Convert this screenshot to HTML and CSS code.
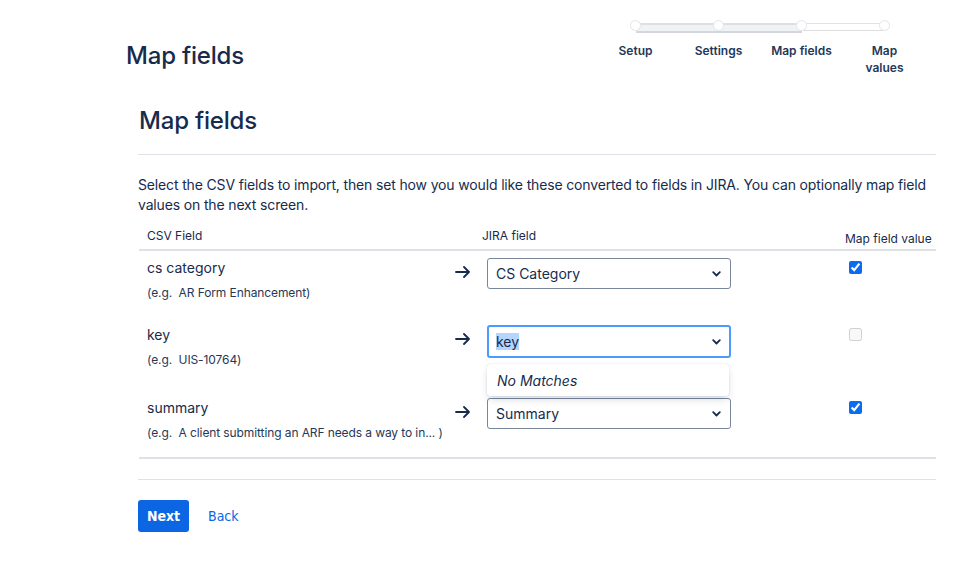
FILE: index.html
```html
<!DOCTYPE html>
<html lang="en">
<head>
<meta charset="utf-8">
<title>Map fields</title>
<link rel="stylesheet" href="styles.css">
</head>
<body>
<div class="page">
  <header class="page-header">
    <h1 class="page-title">Map fields</h1>
    <ol class="tracker">
      <li class="step step--done"><span class="dot"></span><span class="step-label">Setup</span></li>
      <li class="step step--done"><span class="dot"></span><span class="step-label">Settings</span></li>
      <li class="step step--done"><span class="dot"></span><span class="step-label">Map fields</span></li>
      <li class="step"><span class="dot"></span><span class="step-label">Map<br>values</span></li>
    </ol>
  </header>

  <main class="content">
    <h2 class="section-title">Map fields</h2>
    <hr class="rule">
    <p class="intro">Select the CSV fields to import, then set how you would like these converted to fields in JIRA. You can optionally map field values on the next screen.</p>

    <div class="mapping">
      <div class="row row--head">
        <div class="cell cell--csv">CSV Field</div>
        <div class="cell cell--arrow"></div>
        <div class="cell cell--jira">JIRA field</div>
        <div class="cell cell--value">Map field value</div>
      </div>

      <div class="row">
        <div class="cell cell--csv">
          <div class="field-name">cs category</div>
          <div class="field-example">(e.g.&nbsp; AR Form Enhancement)</div>
        </div>
        <div class="cell cell--arrow">
          <svg class="arrow" width="16" height="12" viewBox="0 0 16 12"><path d="M1 6h13M9 1l5 5-5 5" fill="none" stroke="#172B4D" stroke-width="1.8" stroke-linecap="round" stroke-linejoin="round"/></svg>
        </div>
        <div class="cell cell--jira">
          <div class="select">
            <span class="select-text">CS Category</span>
            <svg class="chev" width="9" height="6" viewBox="0 0 9 6"><path d="M1.2 1.2l3.3 3.3 3.3-3.3" fill="none" stroke="#172B4D" stroke-width="1.8" stroke-linecap="round" stroke-linejoin="round"/></svg>
          </div>
        </div>
        <div class="cell cell--value"><input type="checkbox" class="check" checked></div>
      </div>

      <div class="row row--open">
        <div class="cell cell--csv">
          <div class="field-name">key</div>
          <div class="field-example">(e.g.&nbsp; UIS-10764)</div>
        </div>
        <div class="cell cell--arrow">
          <svg class="arrow" width="16" height="12" viewBox="0 0 16 12"><path d="M1 6h13M9 1l5 5-5 5" fill="none" stroke="#172B4D" stroke-width="1.8" stroke-linecap="round" stroke-linejoin="round"/></svg>
        </div>
        <div class="cell cell--jira">
          <div class="combo">
            <div class="select select--focus">
              <span class="select-text"><span class="sel">key</span></span>
              <svg class="chev" width="9" height="6" viewBox="0 0 9 6"><path d="M1.2 1.2l3.3 3.3 3.3-3.3" fill="none" stroke="#172B4D" stroke-width="1.8" stroke-linecap="round" stroke-linejoin="round"/></svg>
            </div>
            <div class="menu"><em>No Matches</em></div>
          </div>
        </div>
        <div class="cell cell--value"><input type="checkbox" class="check" disabled></div>
      </div>

      <div class="row row--last">
        <div class="cell cell--csv">
          <div class="field-name">summary</div>
          <div class="field-example">(e.g.&nbsp; A client submitting an ARF needs a way to in... )</div>
        </div>
        <div class="cell cell--arrow">
          <svg class="arrow" width="16" height="12" viewBox="0 0 16 12"><path d="M1 6h13M9 1l5 5-5 5" fill="none" stroke="#172B4D" stroke-width="1.8" stroke-linecap="round" stroke-linejoin="round"/></svg>
        </div>
        <div class="cell cell--jira">
          <div class="select">
            <span class="select-text">Summary</span>
            <svg class="chev" width="9" height="6" viewBox="0 0 9 6"><path d="M1.2 1.2l3.3 3.3 3.3-3.3" fill="none" stroke="#172B4D" stroke-width="1.8" stroke-linecap="round" stroke-linejoin="round"/></svg>
          </div>
        </div>
        <div class="cell cell--value"><input type="checkbox" class="check" checked></div>
      </div>
    </div>

    <hr class="rule rule--footer">
    <div class="actions">
      <button class="btn-primary" type="button">Next</button>
      <a class="btn-link" href="#">Back</a>
    </div>
  </main>
</div>
</body>
</html>
```

FILE: styles.css
```css
* { box-sizing: border-box; }

html, body {
  margin: 0;
  padding: 0;
  background: #ffffff;
}

body {
  font-family: Inter, "Noto Sans", "Liberation Sans", sans-serif;
  color: #172B4D;
  font-size: 14px;
}

.page {
  width: 971px;
}

/* Header */
.page-header {
  display: flex;
  align-items: flex-start;
  padding-left: 126px;
  height: 76px;
}

.page-title {
  margin: 41px 0 0 0;
  font-size: 24px;
  line-height: 30px;
  font-weight: 500;
  letter-spacing: -0.2px;
  flex: 0 0 auto;
}

.tracker {
  list-style: none;
  margin: 0 0 0 auto;
  padding: 20px 0 0 0;
  display: flex;
  width: 377px;
}

.step {
  position: relative;
  width: 83px;
  display: flex;
  flex-direction: column;
  align-items: center;
}

.step + .step::before {
  content: "";
  position: absolute;
  top: 2.5px;
  left: -50%;
  width: 100%;
  height: 6px;
  border-top: 2px solid #DCDFE4;
  border-bottom: 2px solid #D3D6DC;
  background: #F1F2F4;
  z-index: 0;
}

.step:last-child::before {
  border-top: 1px solid #E0E2E6;
  border-bottom: 1px solid #DCDEE2;
  background: #ffffff;
}

.dot {
  position: relative;
  z-index: 1;
  width: 11px;
  height: 11px;
  border-radius: 50%;
  background: #ffffff;
  border: 1px solid #E3E5E9;
}

.step-label {
  margin-top: 11px;
  font-size: 12px;
  line-height: 17px;
  font-weight: 600;
  text-align: center;
  color: #253858;
}

/* Content */
.content {
  margin-left: 138px;
  width: 798px;
}

.section-title {
  margin: 30px 0 0 1px;
  font-size: 24px;
  line-height: 30px;
  font-weight: 500;
  letter-spacing: -0.2px;
}

.rule {
  margin: 18px 0 0 0;
  border: 0;
  border-top: 1px solid #DFE1E6;
  height: 0;
}

.intro {
  margin: 20px 0 0 0;
  line-height: 20px;
  font-size: 14px;
  letter-spacing: -0.15px;
}

/* Mapping table */
.mapping {
  margin: 13px 0 0 1px;
  width: 797px;
  border-bottom: 2px solid #DFE1E6;
}

.row {
  display: grid;
  grid-template-columns: 308px 33px 358px 98px;
  padding: 7px 0 17px 0;
}

.row--head {
  padding: 0 0 2px 0;
  border-bottom: 2px solid #DFE1E6;
  font-size: 12px;
  line-height: 16px;
}

.row--open {
  padding-bottom: 23px;
}

.row--last {
  padding-bottom: 16px;
}

.cell--csv {
  padding-left: 8px;
}

.row--head .cell--jira {
  padding-left: 2px;
}

.row--head .cell--value {
  padding-left: 7px;
  white-space: nowrap;
}

.field-name {
  font-size: 14px;
  line-height: 20px;
}

.field-example {
  margin-top: 7px;
  font-size: 12px;
  line-height: 16px;
  color: #253858;
  white-space: nowrap;
  letter-spacing: -0.1px;
}

.cell--arrow {
  padding: 8px 0 0 8px;
}

.arrow {
  display: block;
}

.cell--jira .select,
.cell--jira .combo {
  margin-left: 7px;
}

.combo {
  position: relative;
  width: 244px;
}

.combo .select {
  margin-left: 0;
}

.select {
  width: 244px;
  height: 31px;
  border: 1px solid #7A869A;
  border-radius: 3px;
  display: flex;
  align-items: center;
  justify-content: space-between;
  padding: 0 9px 0 8px;
  font-size: 14px;
  background: #ffffff;
}

.select--focus {
  height: 33px;
  border: 2px solid #4C9AFF;
  padding-left: 7px;
  padding-right: 8px;
}

.sel {
  background: #B4D5FE;
}

.chev {
  display: block;
}

.menu {
  position: absolute;
  left: 0;
  top: 39px;
  width: 242px;
  height: 32px;
  background: #ffffff;
  border-radius: 3px;
  box-shadow: 0 4px 8px -2px rgba(9, 30, 66, 0.22), 0 0 1px rgba(9, 30, 66, 0.28);
  display: flex;
  align-items: center;
  padding-left: 10px;
  font-size: 14px;
  z-index: 2;
}

.menu em {
  font-style: italic;
}

.cell--value {
  padding: 3px 0 0 11px;
}

.check {
  margin: 0;
  width: 13px;
  height: 13px;
  accent-color: #0B6CF0;
  display: block;
}

/* Footer */
.rule--footer {
  margin-top: 20px;
}

.actions {
  margin-top: 20px;
  display: flex;
  align-items: center;
  gap: 19px;
}

.btn-primary {
  height: 32px;
  width: 51px;
  padding: 0;
  border: 0;
  border-radius: 3px;
  background: #0C66E4;
  color: #ffffff;
  font-family: "DejaVu Sans Condensed", "DejaVu Sans", sans-serif;
  font-stretch: condensed;
  font-weight: 700;
  font-size: 14px;
}

.btn-link {
  color: #0C66E4;
  text-decoration: none;
  font-family: "DejaVu Sans Condensed", "DejaVu Sans", sans-serif;
  font-stretch: condensed;
  font-size: 14px;
}
```
